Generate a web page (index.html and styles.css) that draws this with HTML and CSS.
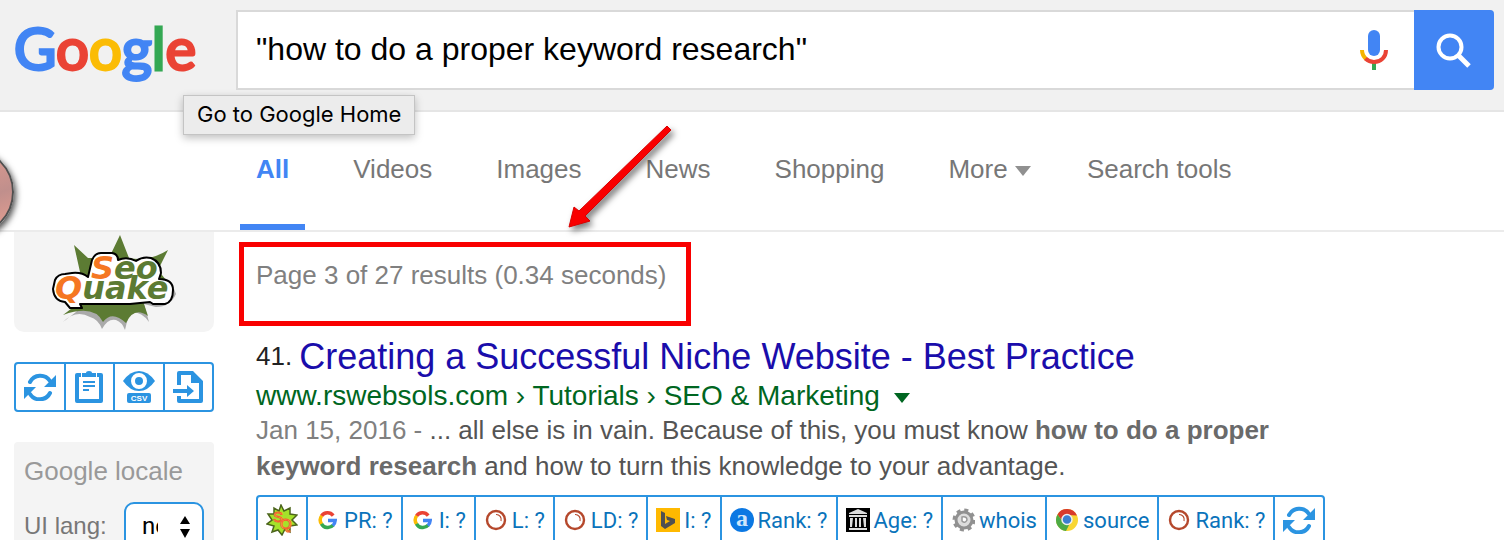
FILE: index.html
```
<!DOCTYPE html>
<html lang="en">
<head>
    <meta charset="UTF-8">
    <meta name="viewport" content="width=device-width, initial-scale=1.0">
    <title>"how to do a proper keyword research" - Google Search</title>
    <link rel="stylesheet" href="styles.css">
</head>
<body>
    <!-- shared icons -->
    <svg class="defs" aria-hidden="true">
        <symbol id="refresh" viewBox="0 0 32 28">
            <path d="M6 9A11.500 11.500 0 0 1 26 8M26 20A11.500 11.500 0 0 1 6 21" fill="none" stroke="#2b94e1" stroke-width="4" stroke-linecap="round"/>
            <path d="M32 2V14H20ZM0 14H12L0 26Z" fill="#2b94e1"/>
        </symbol>
        <symbol id="google" viewBox="0 0 24 24">
            <g fill="none" stroke-width="3.500">
                <path d="M5.500 8A7.200 7.200 0 0 1 17.200 7.600" stroke="#ea4335"/>
                <path d="M5.700 16.200A7.200 7.200 0 0 1 5.700 7.700" stroke="#fbbc05"/>
                <path d="M17.200 17.200A7.200 7.200 0 0 1 5.500 15.800" stroke="#34a853"/>
                <path d="M12 12.500H19.200A7.200 7.200 0 0 1 16.800 17.500" stroke="#4285f4"/>
            </g>
        </symbol>
        <symbol id="ring" viewBox="0 0 24 24">
            <circle cx="12" cy="12" r="9" fill="#fff" stroke="#b5482c" stroke-width="2.400"/>
            <path d="M12 6.500A5 5 0 0 1 17 13" fill="none" stroke="#b5482c" stroke-width="1.200"/>
        </symbol>
    </svg>

    <header class="header">
        <a class="logo" href="#" aria-label="Google Home"><span class="blue">G</span><span class="red">o</span><span class="yellow">o</span><span class="blue">g</span><span class="green">l</span><span class="red">e</span></a>
        <form class="search">
            <input class="search-input" type="text" aria-label="Search" value="&quot;how to do a proper keyword research&quot;">
            <button class="mic" type="button" aria-label="Search by voice">
                <svg width="28" height="40" viewBox="0 0 28 40">
                    <rect x="8" y="0" width="12" height="26" rx="6" fill="#4285f4"/>
                    <path d="M12 33h4v7h-4z" fill="#34a853"/>
                    <path d="M2 20Q2 25 6 29" fill="none" stroke="#f4b400" stroke-width="4"/>
                    <path d="M5.500 28.500Q9 32 14 32C21 32 26 27 26 20" fill="none" stroke="#ea4335" stroke-width="4"/>
                </svg>
            </button>
            <button class="search-button" type="submit" aria-label="Google Search">
                <svg width="36" height="36" viewBox="0 0 36 36" fill="none" stroke="#fff">
                    <circle cx="14" cy="15" r="11.500" stroke-width="4"/>
                    <path d="M22.500 23.500L33 34" stroke-width="5"/>
                </svg>
            </button>
        </form>
        <div class="tooltip" role="tooltip">Go to Google Home</div>
    </header>

    <nav class="nav">
        <a class="nav-link active" href="#">All</a>
        <a class="nav-link" href="#">Videos</a>
        <a class="nav-link" href="#">Images</a>
        <a class="nav-link" href="#">News</a>
        <a class="nav-link" href="#">Shopping</a>
        <a class="nav-link more" href="#">More <span class="arrow-down"></span></a>
        <a class="nav-link" href="#">Search tools</a>
    </nav>

    <div class="content">
        <aside class="sidebar">
            <div class="seoquake">
                <svg width="124" height="98" viewBox="0 0 124 98" role="img" aria-label="SeoQuake">
                    <path d="M11 90Q24 77 38 85Q46 87 50 97Q56 86 64 88Q70 90 73 98Q76 84 80 80Q90 80 97 90L92 72L104 75Q118 75 124 62L120 52L50 55L24 80Z" fill="#aaa"/>
                    <path d="M22 13L36 26L57 26L68 3L77 26Q97 30 116 18L106 38L122 58L90 66L96 84Q82 74 74 91Q60 78 51 90Q42 72 11 83L28 70L28 40Z" fill="#5c7b33"/>
                    <path d="M1 57L3 48Q6 42 13 42L20 41Q30 40 36 45L40 28Q43 21 49 21H60Q66 22 66 28Q75 24 84 29Q91 24 99 26Q109 30 109 41L107 47Q121 47 121 58Q121 70 113 72H101L98 70L78 72H28L30 76H18L13 70Q2 69 1 57Z" fill="#fff" stroke="#000" stroke-width="2" stroke-linejoin="round"/>
                    <g class="seoquake-text">
                        <text x="39" y="47"><tspan class="seo-initial">S</tspan>eo</text>
                        <text x="3" y="67"><tspan class="seo-initial">Q</tspan>uake</text>
                    </g>
                </svg>
            </div>

            <div class="tools">
                <button class="tool" type="button" aria-label="Refresh"><svg width="32" height="28"><use href="#refresh"/></svg></button>
                <button class="tool" type="button" aria-label="Parameters">
                    <svg width="28" height="32" viewBox="0 0 28 32" fill="#2b94e1">
                        <path d="M6 4H2V30H26V4H22" fill="none" stroke="#2b94e1" stroke-width="4" stroke-linejoin="round"/>
                        <path d="M7 2H11Q11 0 14 0T17 2H21V6H7ZM8 10H20V12H8ZM8 14H20V16H8ZM8 18H14V20H8Z"/>
                    </svg>
                </button>
                <button class="tool" type="button" aria-label="View CSV">
                    <svg width="32" height="32" viewBox="0 0 32 32">
                        <path d="M0 10Q7 0 16 0T32 10Q25 20 16 20T0 10Z" fill="#2b94e1"/>
                        <circle cx="16" cy="10" r="6" fill="#2b94e1" stroke="#fff" stroke-width="4"/>
                        <rect x="4" y="22" width="24" height="10" rx="2" fill="#2b94e1"/>
                        <text class="csv" x="16" y="30" text-anchor="middle">CSV</text>
                    </svg>
                </button>
                <button class="tool" type="button" aria-label="Save to file">
                    <svg width="30" height="32" viewBox="0 0 30 32" fill="#2b94e1">
                        <path d="M6 14V2H19M28 10V30H6V25" fill="none" stroke="#2b94e1" stroke-width="4" stroke-linejoin="round"/>
                        <path d="M18 0H20L30 10V12H18ZM0 18H14V14L21 20L14 26V22H0Z"/>
                    </svg>
                </button>
            </div>

            <div class="locale">
                <h2 class="locale-title">Google locale</h2>
                <div class="locale-row">
                    <label for="ui-lang">UI lang:</label>
                    <div class="select-wrap">
                        <select id="ui-lang"><option>no</option></select>
                        <svg class="select-arrows" width="12" height="22" viewBox="0 0 12 22"><path d="M6 0L11 8H1ZM6 22L11 13H1Z"/></svg>
                    </div>
                </div>
            </div>
        </aside>

        <main class="results">
            <div class="stats">Page 3 of 27 results (0.34 seconds)</div>
            <div class="result">
                <h3 class="result-title"><span class="number">41.</span> <a href="#">Creating a Successful Niche Website - Best Practice</a></h3>
                <div class="url">www.rswebsols.com › Tutorials › SEO &amp; Marketing <span class="arrow-down"></span></div>
                <p class="snippet"><span class="date">Jan 15, 2016 - </span>... all else is in vain. Because of this, you must know <b>how to do a proper keyword research</b> and how to turn this knowledge to your advantage.</p>
            </div>

            <div class="seobar">
                <a class="seo-item" href="#" aria-label="SeoQuake">
                    <svg width="32" height="32" viewBox="0 0 32 32">
                        <path d="M15 1L18 7L24 4L24 10L31 11L26 16L31 21L24 22L24 28L19 25L16 31L12 26L6 28L8 22L1 20L6 16L2 10L8 10L8 4L13 7Z" fill="#a4e22a" stroke="#4c651c" stroke-width="1.500"/>
                        <text class="sq" x="7" y="18">S</text>
                        <text class="sq" x="14" y="25">Q</text>
                    </svg>
                </a>
                <a class="seo-item" href="#"><svg class="icon"><use href="#google"/></svg>PR: ?</a>
                <a class="seo-item" href="#"><svg class="icon"><use href="#google"/></svg>I: ?</a>
                <a class="seo-item" href="#"><svg class="icon"><use href="#ring"/></svg>L: ?</a>
                <a class="seo-item" href="#"><svg class="icon"><use href="#ring"/></svg>LD: ?</a>
                <a class="seo-item" href="#">
                    <svg class="icon" viewBox="0 0 24 24"><path d="M0 0H24V24H0Z" fill="#ffb900"/><path d="M5 3L9 5V16L14 13L11 12L10 8L19 11V15L9 21L5 18Z" fill="#505050"/></svg>I: ?
                </a>
                <a class="seo-item" href="#">
                    <svg class="icon" viewBox="0 0 24 24"><circle cx="12" cy="12" r="12" fill="#0b78e3"/><text class="alexa" x="12" y="18" text-anchor="middle">a</text></svg>Rank: ?
                </a>
                <a class="seo-item" href="#">
                    <svg class="icon" viewBox="0 0 24 24"><path d="M0 0H24V24H0Z"/><path d="M12 1L21 5V6H3V5ZM3 7H21V9H3ZM4 10H7L6 19H4ZM9 10H11V19H9ZM13 10H15V19H13ZM17 10H20V19H18ZM3 20H21V22H3Z" fill="#ddd"/></svg>Age: ?
                </a>
                <a class="seo-item" href="#">
                    <svg class="icon" viewBox="0 0 24 24">
                        <circle cx="13" cy="12" r="8" fill="#ddd" stroke="#919191" stroke-width="3"/>
                        <circle cx="13" cy="12" r="10" fill="none" stroke="#919191" stroke-width="3" stroke-dasharray="4 3.850"/>
                        <path d="M11 9Q16 8 16 12Q14 16 11 13Z" fill="#fff" stroke="#999" stroke-width="1.500"/>
                    </svg>whois
                </a>
                <a class="seo-item" href="#">
                    <svg class="icon" viewBox="0 0 24 24">
                        <circle cx="12" cy="12" r="11" fill="#f8d633"/>
                        <path d="M2.500 6.500A11 11 0 0 1 22 7.500L12 7L8 14Z" fill="#d83a2b"/>
                        <path d="M2.500 6.500L8 14L14 17L11 23A11 11 0 0 1 2.500 6.500Z" fill="#4daa45"/>
                        <circle cx="12" cy="11.500" r="5" fill="#3c7fd0" stroke="#eee" stroke-width="1.500"/>
                    </svg>source
                </a>
                <a class="seo-item" href="#"><svg class="icon"><use href="#ring"/></svg>Rank: ?</a>
                <a class="seo-item" href="#" aria-label="Refresh"><svg width="32" height="28"><use href="#refresh"/></svg></a>
            </div>
        </main>
    </div>

    <svg class="pointer" width="120" height="120" viewBox="0 0 120 120" aria-hidden="true">
        <path d="M104 0L108 4L22 90L27 95L6 101L11 81L16 85Z" fill="#f90000" stroke="#d80000" stroke-width="1"/>
    </svg>
    <div class="bubble"></div>
</body>
</html>
```
FILE: styles.css
```
* {
    box-sizing: border-box;
}
body {
    margin: 0;
    height: 100vh;
    overflow: hidden;
    position: relative;
    background-color: #fff;
    color: #222;
    font-family: "Liberation Sans", Arial, sans-serif;
    font-size: 26px;
}
a {
    text-decoration: none;
}
button {
    padding: 0;
    border: none;
    background: none;
    cursor: pointer;
}
svg {
    display: block;
    flex: none;
}
.defs {
    position: absolute;
    width: 0;
    height: 0;
}
.header {
    position: relative;
    display: flex;
    height: 112px;
    padding: 10px 10px 0 14px;
    background-color: #f1f1f1;
    border-bottom: 2px solid #e5e5e5;
}
.logo {
    width: 222px;
    font-family: Lato, sans-serif;
    font-size: 58px;
    line-height: 76px;
    -webkit-text-stroke: 3px;
}
.blue { color: #4285f4; }
.red { color: #ea4335; }
.yellow { color: #fbbc05; }
.green { color: #34a853; }
.search {
    display: flex;
    flex: 1;
    height: 80px;
    background-color: #fff;
    border: 2px solid #d9d9d9;
    border-right: none;
    border-radius: 0 4px 4px 0;
}
.search-input {
    flex: 1;
    padding: 0 18px 2px;
    border: none;
    outline: none;
    background: none;
    color: #000;
    font-family: inherit;
    font-size: 32px;
}
.mic {
    width: 80px;
    display: flex;
    align-items: center;
    justify-content: center;
}
.search-button {
    width: 80px;
    margin: -2px 0;
    display: flex;
    align-items: center;
    justify-content: center;
    background-color: #4285f4;
    border-radius: 0 4px 4px 0;
}
.tooltip {
    position: absolute;
    z-index: 2;
    top: 95px;
    left: 183px;
    padding: 0 13px 2px;
    background-color: #ececec;
    border: 1px solid #c4c4c4;
    box-shadow: 0 3px 8px rgba(0, 0, 0, 0.25);
    color: #000;
    font-family: Inter, sans-serif;
    font-size: 22px;
    line-height: 36px;
    white-space: nowrap;
}
.nav {
    display: flex;
    gap: 32px;
    height: 120px;
    padding-left: 240px;
    border-bottom: 2px solid #ebebeb;
}
.nav-link {
    padding: 0 16px;
    color: #777;
    line-height: 114px;
    white-space: nowrap;
}
.nav-link.active {
    color: #4285f4;
    font-weight: bold;
    border-bottom: 6px solid #4285f4;
}
.nav-link.more {
    padding-right: 8px;
}
.arrow-down {
    display: inline-block;
    border: 8px solid transparent;
    border-top: 10px solid;
    border-bottom: none;
    vertical-align: 2px;
}
.nav .arrow-down {
    color: #909090;
}
.content {
    display: flex;
    padding-left: 14px;
}
.sidebar {
    width: 200px;
    margin-right: 42px;
}
.seoquake {
    display: flex;
    justify-content: center;
    height: 100px;
    background-color: #f4f4f4;
    border-radius: 0 0 10px 10px;
}
.seoquake-text {
    font-family: "DejaVu Sans", sans-serif;
    font-size: 32px;
    font-weight: bold;
    font-style: italic;
    fill: #5c7b33;
}
.seo-initial {
    fill: #f57722;
}
.tools {
    display: flex;
    height: 50px;
    margin: 30px 0;
    border: 2px solid #2b94e1;
    border-radius: 4px;
}
.tool {
    flex: 1;
    box-sizing: content-box;
    display: flex;
    align-items: center;
    justify-content: center;
}
.tool + .tool {
    border-left: 2px solid #2b94e1;
}
.csv {
    fill: #fff;
    font-family: "Liberation Sans", Arial, sans-serif;
    font-size: 8px;
    font-weight: bold;
}
.locale {
    padding: 10px 10px 20px;
    background-color: #f4f4f4;
    border-radius: 4px;
}
.locale-title {
    margin: 0 0 12px;
    color: #999;
    font-size: 26px;
    font-weight: normal;
    line-height: 38px;
}
.locale-row {
    display: flex;
    align-items: center;
    justify-content: space-between;
    color: #777;
    font-size: 24px;
}
.select-wrap {
    position: relative;
}
.select-wrap select {
    appearance: none;
    display: block;
    width: 80px;
    height: 48px;
    padding: 0 44px 0 16px;
    background-color: #fff;
    border: 2px solid #2b94e1;
    border-radius: 10px;
    color: #000;
    font-family: Roboto, sans-serif;
    font-size: 24px;
}
.select-arrows {
    position: absolute;
    top: 14px;
    right: 13px;
    pointer-events: none;
}
.results {
    flex: 1;
}
.stats {
    width: fit-content;
    height: 84px;
    margin: 10px 0 0 -17px;
    padding: 12px 20px 0 12px;
    border: 5px solid #f90000;
    color: #808080;
    line-height: 32px;
}
.result-title {
    margin: 8px 0 0;
    font-size: 36px;
    font-weight: normal;
    line-height: 44px;
}
.result-title a {
    margin-left: -3px;
    color: #1a0dab;
}
.number {
    font-size: 26px;
    vertical-align: 4px;
}
.url {
    color: #006621;
    font-size: 28px;
    line-height: 33px;
}
.url .arrow-down {
    margin-left: 6px;
}
.snippet {
    max-width: 1060px;
    margin: 0;
    color: #545454;
    line-height: 36px;
}
.snippet b {
    color: #6a6a6a;
}
.date {
    color: #808080;
}
.seobar {
    display: flex;
    width: fit-content;
    height: 50px;
    margin-top: 11px;
    border: 2px solid #2b94e1;
    border-radius: 4px;
}
.seo-item {
    display: flex;
    align-items: center;
    gap: 4px;
    padding: 0 8px;
    color: #0a73bb;
    font-family: Roboto, sans-serif;
    font-size: 22px;
    white-space: nowrap;
}
.seo-item + .seo-item {
    border-left: 2px solid #2b94e1;
}
.icon {
    width: 24px;
    height: 24px;
}
.sq {
    fill: #fff27a;
    stroke: #f0642d;
    stroke-width: 1px;
    font-family: "Liberation Sans", Arial, sans-serif;
    font-size: 15px;
}
.alexa {
    fill: #cfe6fb;
    font-family: "Liberation Serif", serif;
    font-size: 24px;
    font-weight: bold;
}
.pointer {
    position: absolute;
    top: 126px;
    left: 563px;
    filter: drop-shadow(3px 4px 3px rgba(0, 0, 0, 0.5));
}
.bubble {
    position: absolute;
    top: 148px;
    left: -74px;
    width: 88px;
    height: 88px;
    border: 2px solid #505050;
    border-radius: 50%;
    background: linear-gradient(160deg, #eba091, #c08f8c 60%, #eba091);
    box-shadow: 2px 3px 6px rgba(0, 0, 0, 0.7);
}
```
